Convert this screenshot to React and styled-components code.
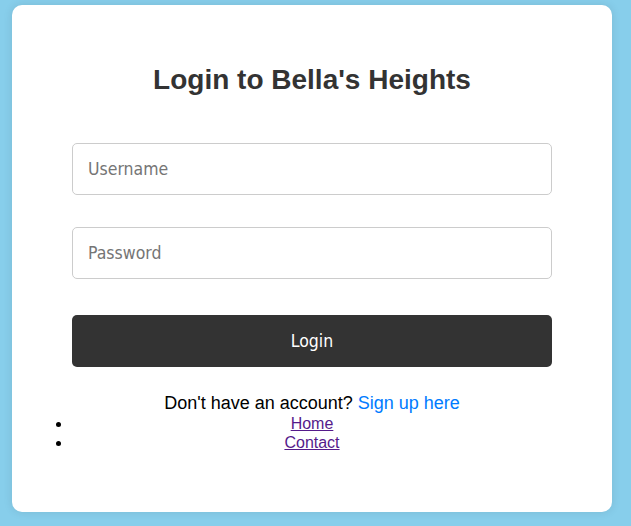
import React from "react";
import styled, { createGlobalStyle } from "styled-components";

const GlobalStyle = createGlobalStyle`
  html, body {
    margin: 0;
    padding: 0;
    background: #87ceeb;
    font-family: "Liberation Sans", Arial, sans-serif;
  }
`;

const Page = styled.div`
  min-height: 526px;
  box-sizing: border-box;
  padding: 5px 19px 14px 12px;
  display: flex;
  align-items: flex-start;
`;

const Card = styled.div`
  width: 600px;
  box-sizing: border-box;
  padding: 60px;
  background: #ffffff;
  border-radius: 10px;
  box-shadow: 0 0 10px rgba(0, 0, 0, 0.1);
  display: flex;
  flex-direction: column;
  text-align: center;
`;

const Title = styled.h2`
  margin: 0 0 48px;
  font-size: 28px;
  line-height: 30px;
  font-weight: bold;
  color: #333333;
`;

const Form = styled.form`
  display: flex;
  flex-direction: column;
  margin: 0;
`;

const uiFont = `"DejaVu Sans Condensed", Tahoma, "DejaVu Sans", sans-serif`;

const Input = styled.input`
  box-sizing: border-box;
  width: 100%;
  height: 52px;
  margin-bottom: ${(p) => p.$gap}px;
  padding: 0 15px;
  border: 1px solid #cccccc;
  border-radius: 5px;
  font-family: ${uiFont};
  font-size: 17.5px;
  color: #333;
  outline: none;
  &::placeholder {
    color: #757575;
  }
`;

const Button = styled.button`
  box-sizing: border-box;
  width: 100%;
  height: 52px;
  border: none;
  border-radius: 5px;
  background: #333333;
  color: #ffffff;
  font-family: ${uiFont};
  font-size: 17.5px;
  cursor: pointer;
`;

const Signup = styled.p`
  margin: 25px 0 0;
  font-size: 18px;
  line-height: 22px;
  color: #000000;
`;

const SignupLink = styled.a`
  color: #007bff;
  text-decoration: none;
`;

const NavList = styled.ul`
  margin: 0;
  padding: 0;
  font-size: 16px;
  line-height: 19px;
`;

const NavItem = styled.li`
  text-align: center;
`;

const NavLink = styled.a`
  color: #551a8b;
  text-decoration: underline;
`;

export default function App() {
  return (
    <>
      <GlobalStyle />
      <Page>
        <Card>
          <Title>Login to Bella's Heights</Title>
          <Form onSubmit={(e) => e.preventDefault()}>
            <Input type="text" placeholder="Username" $gap={32} />
            <Input type="password" placeholder="Password" $gap={36} />
            <Button type="submit">Login</Button>
          </Form>
          <Signup>
            Don't have an account? <SignupLink href="#">Sign up here</SignupLink>
          </Signup>
          <NavList>
            <NavItem>
              <NavLink href="#">Home</NavLink>
            </NavItem>
            <NavItem>
              <NavLink href="#">Contact</NavLink>
            </NavItem>
          </NavList>
        </Card>
      </Page>
    </>
  );
}
